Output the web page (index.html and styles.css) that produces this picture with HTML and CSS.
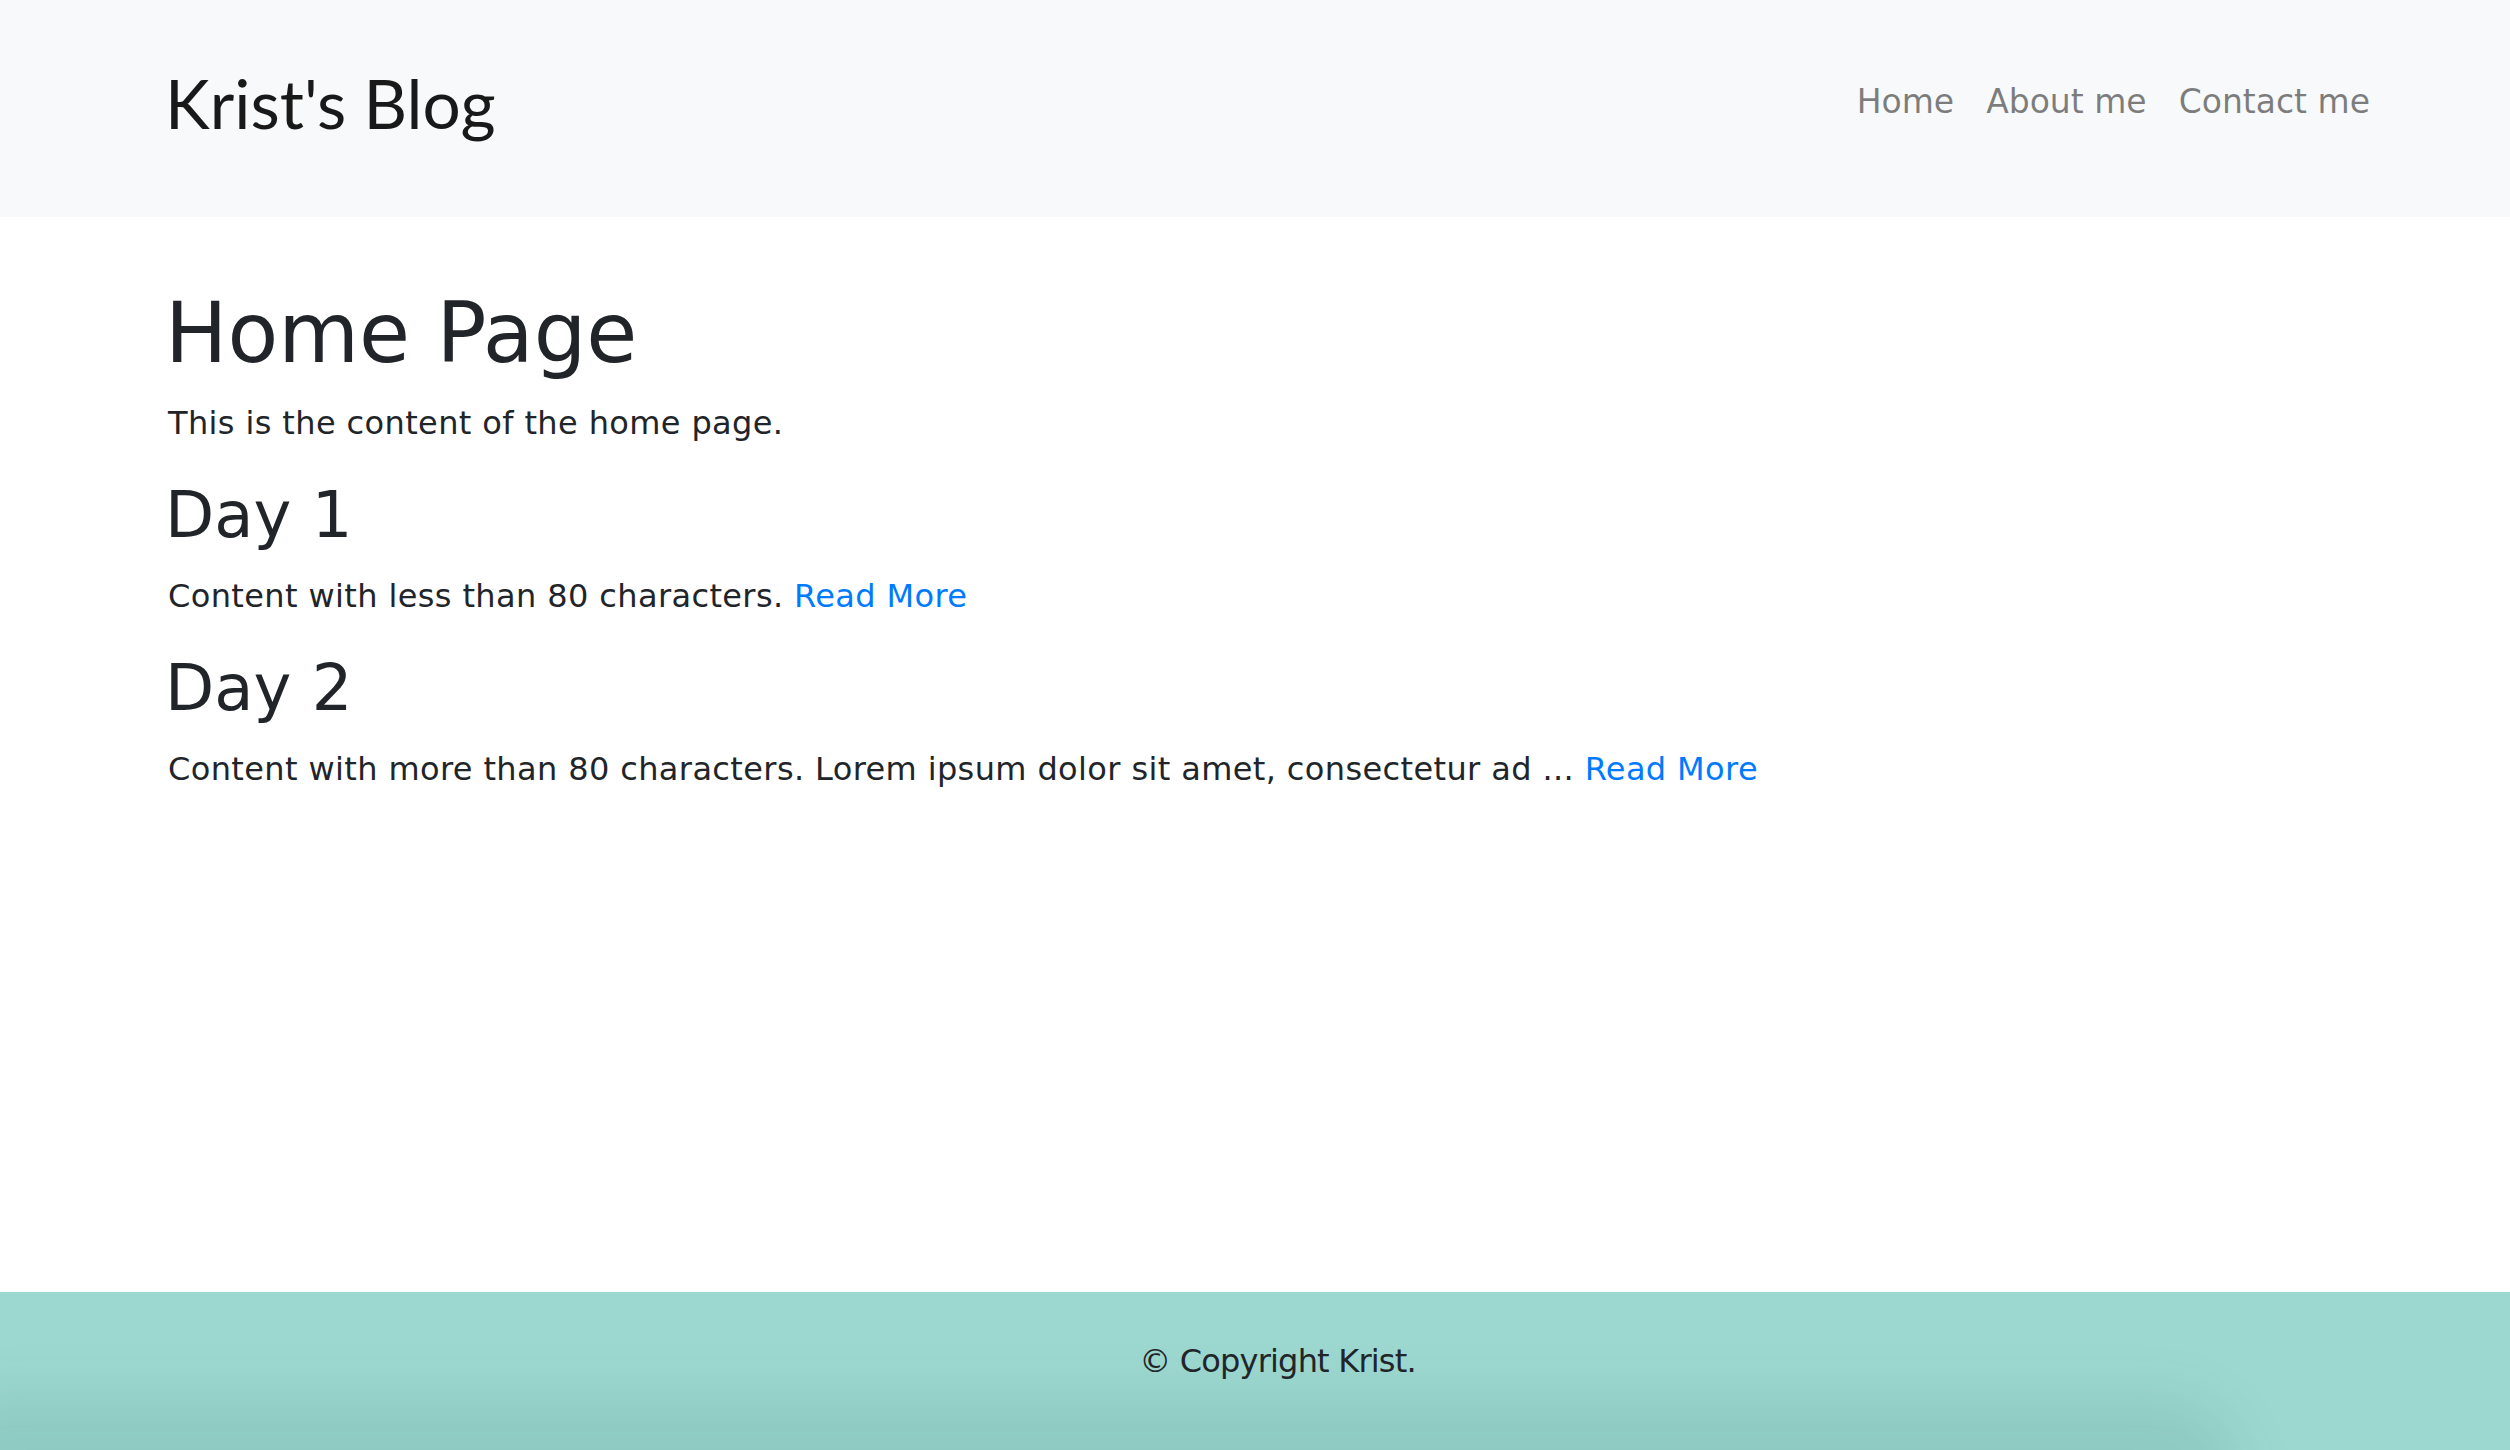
FILE: index.html
```html
<!DOCTYPE html>
<html lang="en">
<head>
<meta charset="utf-8">
<title>Krist's Blog</title>
<link rel="stylesheet" href="styles.css">
</head>
<body>
<header class="site-header">
  <a class="brand" href="#">Krist's Blog</a>
  <nav class="nav">
    <a class="nav-link" href="#">Home</a>
    <a class="nav-link" href="#">About me</a>
    <a class="nav-link" href="#">Contact me</a>
  </nav>
</header>
<main class="content">
  <h1 class="page-title">Home Page</h1>
  <p class="text">This is the content of the home page.</p>
  <h2 class="post-title">Day 1</h2>
  <p class="text">Content with less than 80 characters. <a class="more" href="#">Read More</a></p>
  <h2 class="post-title">Day 2</h2>
  <p class="text">Content with more than 80 characters. Lorem ipsum dolor sit amet, consectetur ad ... <a class="more" href="#">Read More</a></p>
</main>
<footer class="site-footer">
  <p class="copyright">© Copyright Krist.</p>
</footer>
</body>
</html>
```
FILE: styles.css
```css
html, body {
  margin: 0;
  padding: 0;
}
body {
  font-family: "DejaVu Sans", sans-serif;
  font-size: 32px;
  line-height: 1.5;
  color: #212529;
  background: #fff;
  min-height: 100vh;
  display: flex;
  flex-direction: column;
}
a { text-decoration: none; }

.site-header {
  background: #f8f9fa;
  height: 217px;
  box-sizing: border-box;
  padding: 69px 140px 0 168px;
  display: flex;
  justify-content: space-between;
  align-items: flex-start;
}
.brand {
  font-family: "Lato", sans-serif;
  font-size: 67.5px;
  line-height: 1;
  color: rgba(0, 0, 0, 0.9);
  margin-left: -3px;
}
.nav {
  display: flex;
  margin-top: 16px;
  margin-right: -16px;
}
.nav-link {
  font-size: 33px;
  line-height: 1;
  padding: 0 16px;
  color: rgba(0, 0, 0, 0.5);
}

.content {
  flex: 1;
  padding: 69px 168px 0 168px;
}
.page-title {
  font-size: 83px;
  font-weight: normal;
  line-height: 96px;
  margin: 0 0 17px -3px;
}
.post-title {
  font-size: 64px;
  font-weight: normal;
  line-height: 76.8px;
  margin: 0 0 18px -3px;
}
.text {
  margin: 0 0 30px;
  letter-spacing: 0.38px;
}
.more { color: #007bff; }

.site-footer {
  position: relative;
  overflow: hidden;
  height: 158px;
  box-sizing: border-box;
  padding-top: 45px;
  padding-left: 45px;
  text-align: center;
  background: #9cd8d0;
}
.site-footer::before {
  content: "";
  position: absolute;
  left: -80px;
  right: 270px;
  top: 105px;
  height: 160px;
  border-radius: 120px;
  background: rgba(0, 60, 50, 0.085);
  filter: blur(28px);
}
.copyright {
  position: relative;
  margin: 0;
  letter-spacing: -0.8px;
}
```
